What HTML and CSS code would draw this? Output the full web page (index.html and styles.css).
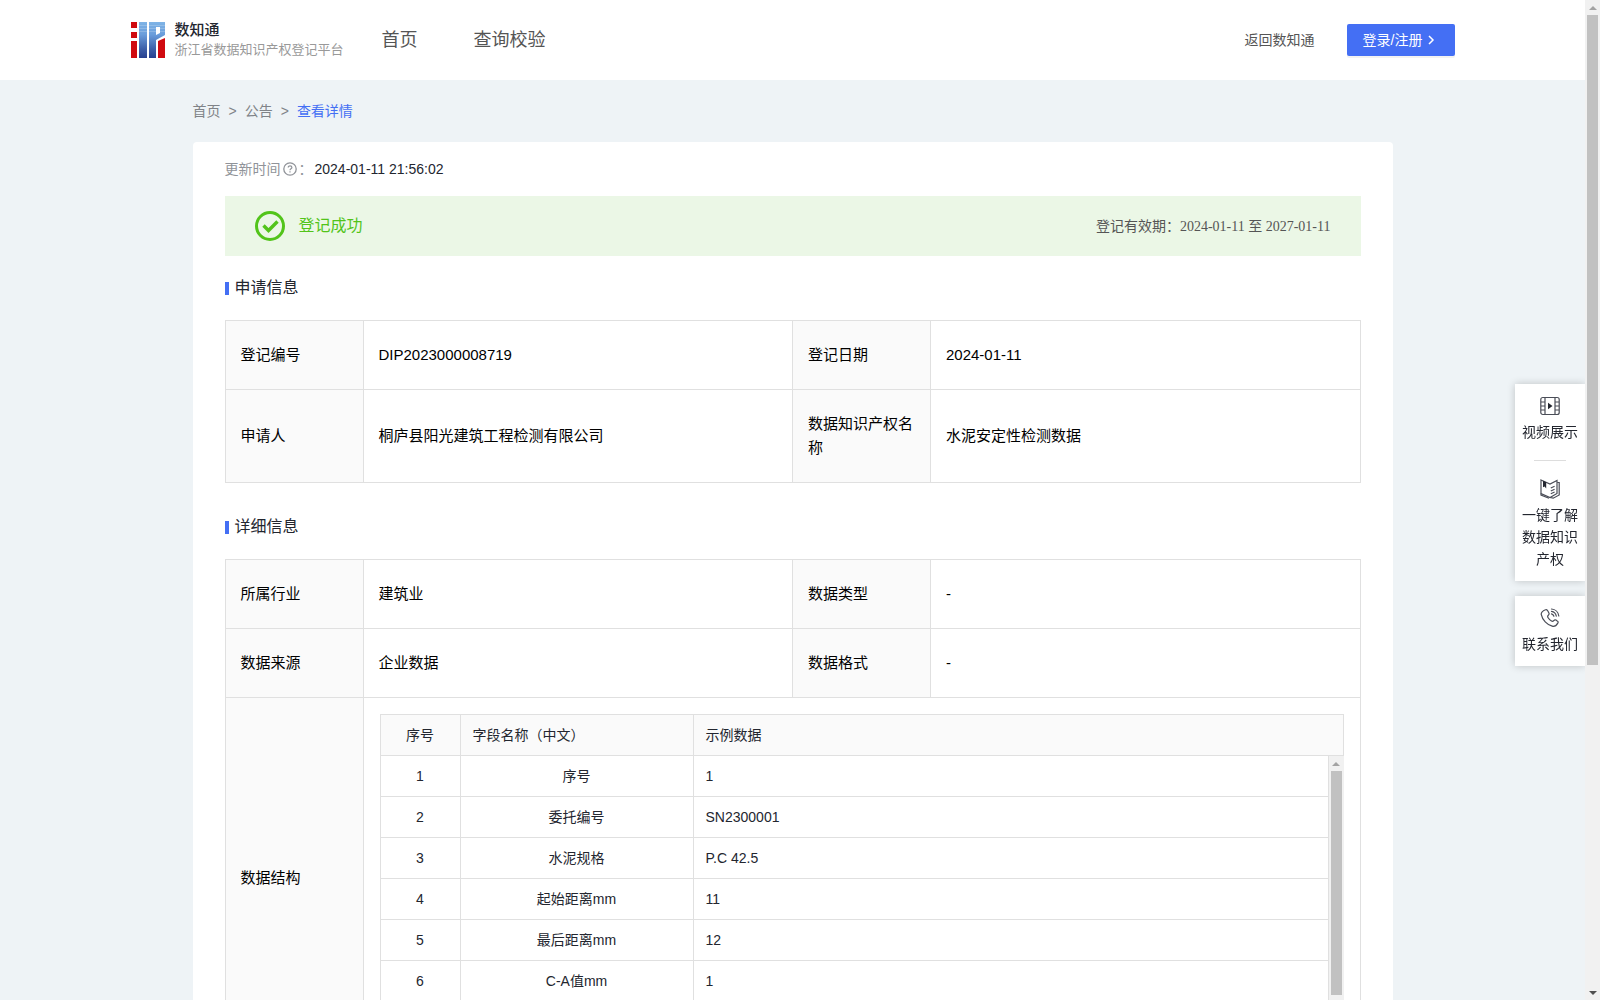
FILE: index.html
```html
<!DOCTYPE html>
<html lang="zh-CN">
<head>
    <meta charset="UTF-8">
    <meta name="viewport" content="width=device-width, initial-scale=1.0">
    <title>浙江省数据知识产权登记平台</title>
    <link rel="stylesheet" href="styles.css">
</head>
<body>
    <div class="page">
        <header class="header">
            <div class="header-inner">
                <a class="logo" href="#">
                    <svg class="logo-mark" viewBox="0 0 34 36">
                        <defs>
                            <linearGradient id="blue" x1="0" y1="0" x2="0" y2="1">
                                <stop offset="0" stop-color="#7fb4e6"/>
                                <stop offset="0.35" stop-color="#6a9ddb"/>
                                <stop offset="0.75" stop-color="#3d5fa8"/>
                                <stop offset="1" stop-color="#27408f"/>
                            </linearGradient>
                        </defs>
                        <path fill="#d00a10" d="M0 0h6v6H0zM0 10h6v6H0zM0 19h6v17H0zM27 19l7-3v20h-7z"/>
                        <path fill="url(#blue)" d="M8 0h8v36H8zM18 0h16v13l-9 5v18h-7zM25 5v8l4-2V5z" fill-rule="evenodd"/>
                        <path stroke="#fff" stroke-opacity="0.2" d="M8 3.500h26M8 6.500h26M8 9.500h26"/>
                    </svg>
                    <span class="logo-text">
                        <strong>数知通</strong>
                        <small>浙江省数据知识产权登记平台</small>
                    </span>
                </a>
                <nav class="nav">
                    <a href="#">首页</a>
                    <a href="#">查询校验</a>
                </nav>
                <a class="back" href="#">返回数知通</a>
                <button class="login" type="button">登录/注册
                    <svg viewBox="0 0 8 10"><path d="M2 1l4 4-4 4" fill="none" stroke="#fff" stroke-width="1.5"/></svg>
                </button>
            </div>
        </header>

        <main class="main">
            <nav class="breadcrumb">
                <a href="#">首页</a><span>&gt;</span><a href="#">公告</a><span>&gt;</span><a class="current" href="#">查看详情</a>
            </nav>

            <section class="card">
                <div class="updated">
                    <span>更新时间</span>
                    <svg viewBox="0 0 14 14" fill="none" stroke="#909399">
                        <circle cx="7" cy="7" r="6.2" stroke-width="1.3"/>
                        <path d="M5.200 5.600c0-2.300 3.700-2.300 3.700 0 0 1.200-1.900 1.300-1.900 2.600M7 9.300v1.300" stroke-width="1.200"/>
                    </svg>
                    <span>：</span>
                    <time>2024-01-11 21:56:02</time>
                </div>

                <div class="banner">
                    <svg viewBox="0 0 30 30" fill="none" stroke="#52c41a">
                        <circle cx="15" cy="15" r="13.500" stroke-width="3"/>
                        <path d="M8.500 14.500l5 5 9-9" stroke-width="3.400"/>
                    </svg>
                    <span class="status">登记成功</span>
                    <span class="period">登记有效期：<span class="dates">2024-01-11 至 2027-01-11</span></span>
                </div>

                <h2 class="title">申请信息</h2>
                <table class="info">
                    <tr>
                        <th>登记编号</th><td>DIP2023000008719</td>
                        <th>登记日期</th><td>2024-01-11</td>
                    </tr>
                    <tr>
                        <th>申请人</th><td>桐庐县阳光建筑工程检测有限公司</td>
                        <th>数据知识产权名称</th><td>水泥安定性检测数据</td>
                    </tr>
                </table>

                <h2 class="title">详细信息</h2>
                <table class="info">
                    <tr>
                        <th>所属行业</th><td>建筑业</td>
                        <th>数据类型</th><td>-</td>
                    </tr>
                    <tr>
                        <th>数据来源</th><td>企业数据</td>
                        <th>数据格式</th><td>-</td>
                    </tr>
                    <tr>
                        <th>数据结构</th>
                        <td class="nested" colspan="3">
                            <table class="fields">
                                <tr><th class="num">序号</th><th class="name">字段名称（中文）</th><th>示例数据</th></tr>
                            </table>
                            <div class="fields-body">
                                <div class="fields-rows">
                                    <table class="fields">
                                        <tr><td class="num">1</td><td class="name">序号</td><td>1</td></tr>
                                        <tr><td class="num">2</td><td class="name">委托编号</td><td>SN2300001</td></tr>
                                        <tr><td class="num">3</td><td class="name">水泥规格</td><td>P.C 42.5</td></tr>
                                        <tr><td class="num">4</td><td class="name">起始距离mm</td><td>11</td></tr>
                                        <tr><td class="num">5</td><td class="name">最后距离mm</td><td>12</td></tr>
                                        <tr><td class="num">6</td><td class="name">C-A值mm</td><td>1</td></tr>
                                    </table>
                                </div>
                                <div class="scrollbar">
                                    <i class="arrow up disabled"></i>
                                    <div class="track"><div class="thumb thumb-fields"></div></div>
                                    <i class="arrow down"></i>
                                </div>
                            </div>
                        </td>
                    </tr>
                </table>
            </section>
        </main>
    </div>

    <div class="scrollbar">
        <i class="arrow up disabled"></i>
        <div class="track"><div class="thumb thumb-page"></div></div>
        <i class="arrow down"></i>
    </div>

    <aside class="side">
        <div class="side-box">
            <a href="#">
                <svg viewBox="0 0 20 20" fill="none" stroke="#4a4d57" stroke-width="1.200">
                    <rect x="0.800" y="1.500" width="18.400" height="17" rx="2"/>
                    <path d="M5 1.500v17M15 1.500v17M1 6h4M1 10h4M1 14h4M15 6h4M15 10h4M15 14h4"/>
                    <path d="M8 6.800v6.400l4.500-3.200z" fill="#23262f" stroke="none"/>
                </svg>
                视频展示
            </a>
            <hr>
            <a href="#">
                <svg viewBox="0 0 20 20" fill="none" stroke="#4a4d57" stroke-width="1.200">
                    <path d="M1 1l9 4 7-3.500v13L10 18.500 1 14.500z"/>
                    <path d="M17.200 3.500h2v12.500l-6 3.200L10 18.500M1 14.500v1.500l8 3.300M10.800 9l3.800-1.800M10.800 12l3.800-1.800M10.800 14.800l3.800-1.800"/>
                    <path d="M3 1.800l3.200 1.400V9.500L4.600 7.600 3 8.300z" fill="#23262f" stroke="none"/>
                </svg>
                一键了解数据知识产权
            </a>
        </div>
        <div class="side-box">
            <a href="#">
                <svg viewBox="0 0 20 20" fill="none" stroke="#4a4d57" stroke-width="1.200" stroke-linecap="round">
                    <path d="M5.500 1.800c1-.6 1.600 0 2.200 1l1.200 2.200c.5 1 .2 1.600-.6 2.300-.9.800-.9 1.400-.2 2.500.9 1.400 2 2.500 3.400 3.300 1 .6 1.500.5 2.200-.4.800-.9 1.400-1.100 2.300-.6l1.200.8c1 .6 1.200 1.300.6 2.200-1.200 2.200-3.200 3.700-5.600 3.100C7 16.900 2.400 12 1.300 6.700.8 4.700 3.200 2.800 5.500 1.800z"/>
                    <path d="M11.500 1c3.800.3 6.800 3.200 7.300 7M11.500 3.400c2.400.4 4.300 2.200 4.800 4.700M11.500 5.800c1.200.3 2 1.100 2.400 2.400"/>
                </svg>
                联系我们
            </a>
        </div>
    </aside>
</body>
</html>
```

FILE: styles.css
```css
* {
    box-sizing: border-box;
    margin: 0;
    padding: 0;
}

body {
    display: flex;
    font-family: "Liberation Sans", "Noto Sans CJK SC", sans-serif;
    font-size: 14px;
    line-height: 22px;
    color: #23262f;
    background: #eef3f6;
    height: 100vh;
    overflow: hidden;
}

a {
    color: inherit;
    text-decoration: none;
}

.page {
    flex: 1;
    overflow-y: auto;
    scrollbar-width: none;
}

/* Header */
.header {
    background: #ffffff;
}

.header-inner {
    display: flex;
    align-items: center;
    max-width: 1324px;
    height: 80px;
    margin: 0 auto;
}

.logo {
    display: flex;
    align-items: center;
    gap: 10px;
}

.logo-mark {
    width: 34px;
    height: 36px;
}

.logo-text {
    display: flex;
    flex-direction: column;
}

.logo-text strong {
    font-size: 15px;
    font-weight: 500;
    line-height: 20px;
}

.logo-text small {
    font-size: 13px;
    line-height: 20px;
    color: #999999;
}

.nav {
    display: flex;
    gap: 56px;
    margin-left: 38px;
    font-size: 18px;
    color: #555555;
}

.back {
    margin-left: auto;
    color: #555555;
}

.login {
    display: flex;
    align-items: center;
    gap: 4px;
    height: 32px;
    margin-left: 32px;
    padding: 0 20px 0 16px;
    border: none;
    border-radius: 2px;
    font: inherit;
    color: #ffffff;
    background: #446ff4;
    box-shadow: 0 2px 0 rgba(0, 0, 0, 0.05);
    cursor: pointer;
}

.login svg {
    width: 8px;
    height: 10px;
}

/* Content */
.main {
    max-width: 1200px;
    margin: 0 auto;
}

.breadcrumb {
    display: flex;
    gap: 8px;
    padding: 20px 0;
    color: #808388;
}

.breadcrumb .current {
    color: #446ff4;
}

.card {
    padding: 16px 32px 32px;
    border-radius: 4px;
    background: #ffffff;
}

.updated {
    display: flex;
    align-items: center;
    gap: 2px;
    color: #909399;
}

.updated svg {
    width: 14px;
    height: 14px;
}

.updated time {
    color: #23262f;
}

.banner {
    display: flex;
    align-items: center;
    height: 60px;
    margin-top: 16px;
    padding: 0 30px;
    background: #ebf7e6;
}

.banner svg {
    width: 30px;
    height: 30px;
}

.status {
    margin-left: 14px;
    font-size: 16px;
    color: #52c41a;
}

.period {
    margin-left: auto;
    color: #555555;
}

.dates {
    font-family: "Liberation Serif", "Noto Sans CJK SC", serif;
}

.title {
    display: flex;
    align-items: center;
    gap: 6px;
    margin: 20px 0;
    font-size: 16px;
    font-weight: 400;
    line-height: 24px;
}

.title::before {
    content: "";
    width: 4px;
    height: 13px;
    background: #446ff4;
}

.info + .title {
    margin-top: 32px;
}

/* Tables */
table {
    width: 100%;
    border-collapse: collapse;
    table-layout: fixed;
}

th {
    font-weight: 400;
    text-align: left;
    background: #fafafa;
}

th,
td {
    border: 1px solid #e0e0e0;
}

.info {
    font-size: 15px;
    line-height: 24px;
    color: #000000;
}

.info > tbody > tr > th,
.info > tbody > tr > td {
    padding: 22px 15px;
}

.info > tbody > tr > th {
    width: 138px;
}

.info > tbody > tr > .nested {
    padding: 16px;
}

.fields {
    font-size: 14px;
    line-height: 22px;
    color: #23262f;
}

.fields th,
.fields td {
    height: 41px;
    padding: 0 12px;
}

.fields .num {
    width: 80px;
    text-align: center;
}

.fields .name {
    width: 233px;
}

.fields td.name {
    text-align: center;
}

.fields-body {
    display: flex;
    height: 287px;
    margin-top: -1px;
}

.fields-rows {
    flex: 1;
    overflow-y: auto;
    scrollbar-width: none;
}

.fields-body .scrollbar {
    border-top: 1px solid #e0e0e0;
}

/* Scrollbars */
.scrollbar {
    display: flex;
    flex-direction: column;
    width: 15px;
    background: #f1f1f1;
}

.arrow {
    display: flex;
    justify-content: center;
    align-items: center;
    height: 15px;
}

.arrow::before {
    content: "";
    border: 4px solid transparent;
}

.arrow.up::before {
    border-top: none;
    border-bottom-color: #505050;
}

.arrow.down::before {
    border-bottom: none;
    border-top-color: #505050;
}

.arrow.disabled::before {
    border-bottom-color: #a3a3a3;
}

.track {
    flex: 1;
    padding: 0 2px;
}

.thumb {
    background: #c1c1c1;
}

.thumb-page {
    height: 67%;
}

.thumb-fields {
    height: 224px;
}

/* Floating links on the right edge */
.side {
    position: fixed;
    top: 384px;
    right: 15px;
    display: flex;
    flex-direction: column;
    gap: 15px;
    width: 70px;
}

.side-box {
    padding: 12px 6px 11px;
    background: #ffffff;
    box-shadow: 0 0 8px rgba(0, 0, 0, 0.2);
    clip-path: inset(-10px 0 -10px -10px);
}

.side-box a {
    display: flex;
    flex-direction: column;
    align-items: center;
    gap: 5px;
    text-align: center;
}

.side-box svg {
    width: 20px;
    height: 20px;
}

.side-box hr {
    width: 32px;
    margin: 17px auto 18px;
    border: none;
    border-top: 1px solid #dddddd;
}
```
